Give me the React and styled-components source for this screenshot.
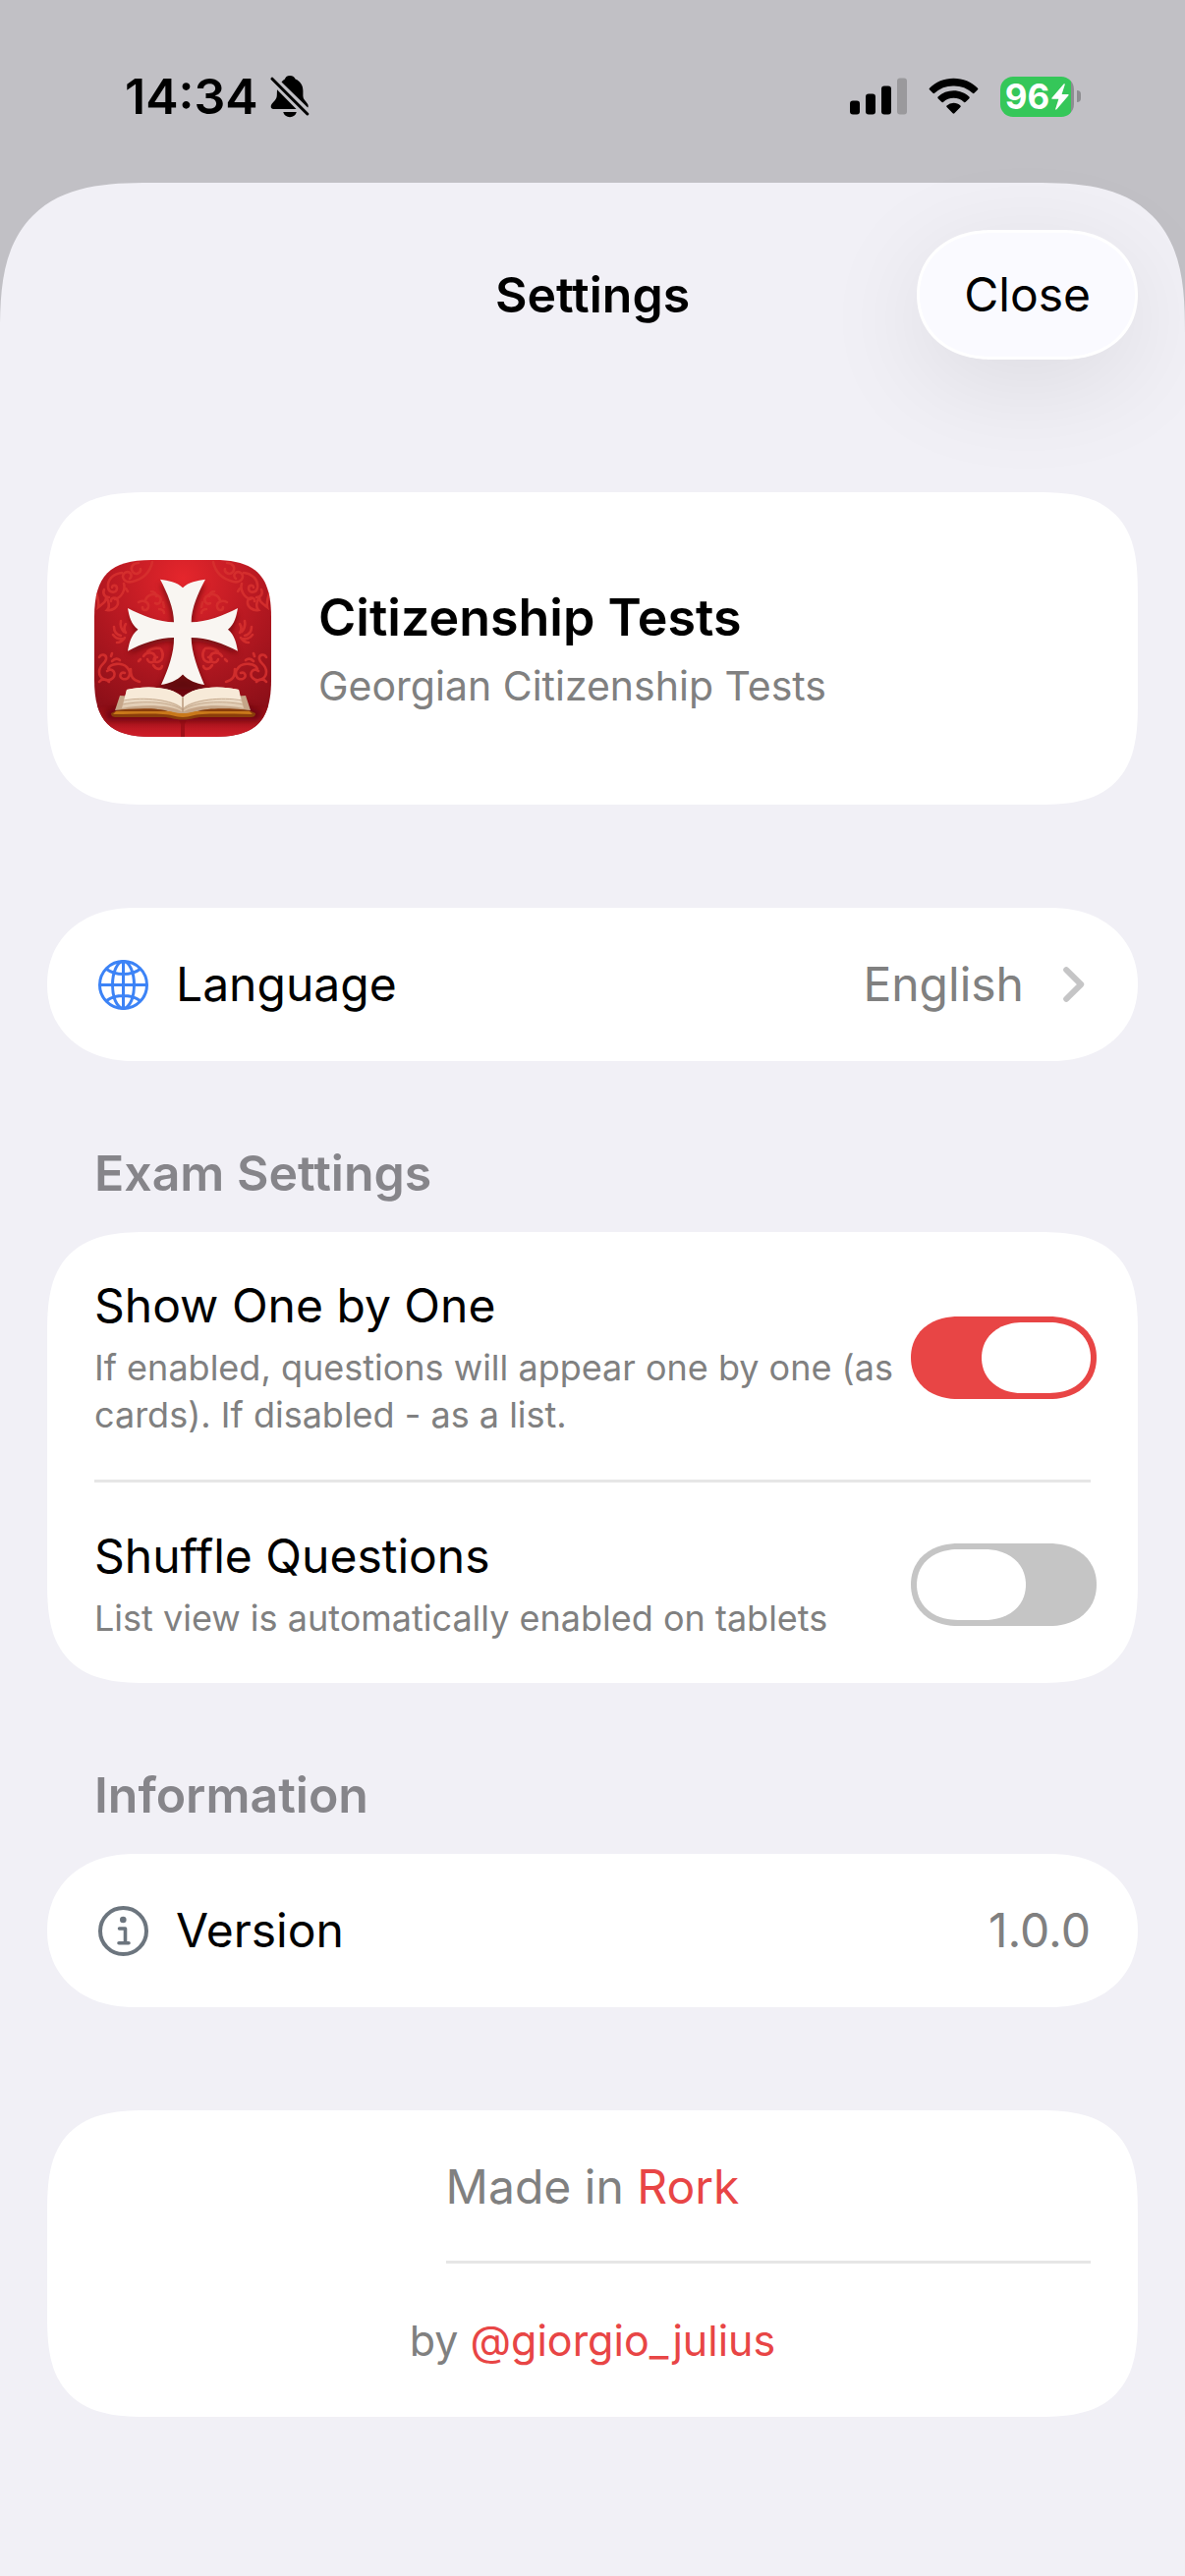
import React, { useState } from "react";
import styled, { createGlobalStyle, css } from "styled-components";

const SettingsRow = ({ icon, label, children }) => (
  <>
    <RowLabel>
      {icon}
      {label}
    </RowLabel>
    <RowValue>{children}</RowValue>
  </>
);

const ToggleRow = ({ id, title, description, defaultOn }) => {
  const [on, setOn] = useState(defaultOn);

  return (
    <SwitchRow>
      <SwitchText htmlFor={id}>
        <SwitchTitle>{title}</SwitchTitle>
        <SwitchHint>{description}</SwitchHint>
      </SwitchText>
      <Switch
        id={id}
        type="checkbox"
        role="switch"
        checked={on}
        onChange={e => setOn(e.target.checked)}
      />
    </SwitchRow>
  );
};

const App = () => (
  <>
    <GlobalStyle />
    <Screen>
      <StatusBar>
        <Clock>
          14:34
          <BellOffIcon />
        </Clock>
        <StatusIcons>
          <SignalIcon />
          <WifiIcon />
          <Battery>
            <BatteryLevel>
              96
              <BoltIcon />
            </BatteryLevel>
            <BatteryTip />
          </Battery>
        </StatusIcons>
      </StatusBar>

      <Sheet>
        <Header>
          <Title>Settings</Title>
          <CloseButton type="button">Close</CloseButton>
        </Header>

        <AppCard>
          <AppIcon />
          <div>
            <AppName>Citizenship Tests</AppName>
            <AppSubtitle>Georgian Citizenship Tests</AppSubtitle>
          </div>
        </AppCard>

        <LinkCard as="button" type="button">
          <SettingsRow icon={<GlobeIcon />} label="Language">
            English
            <ChevronIcon />
          </SettingsRow>
        </LinkCard>

        <SectionTitle>Exam Settings</SectionTitle>
        <Card>
          <ToggleRow
            id="one-by-one"
            title="Show One by One"
            description="If enabled, questions will appear one by one (as cards). If disabled - as a list."
            defaultOn={true}
          />
          <Divider />
          <ToggleRow
            id="shuffle"
            title="Shuffle Questions"
            description="List view is automatically enabled on tablets"
            defaultOn={false}
          />
        </Card>

        <SectionTitle>Information</SectionTitle>
        <RowCard>
          <SettingsRow icon={<InfoIcon />} label="Version">
            1.0.0
          </SettingsRow>
        </RowCard>

        <CreditsCard>
          <MadeIn>
            Made in <a href="#rork">Rork</a>
          </MadeIn>
          <CreditsDivider />
          <Author>
            by <a href="#giorgio_julius">@giorgio_julius</a>
          </Author>
        </CreditsCard>
      </Sheet>
    </Screen>
  </>
);

export default App;

/* ---------- icons ---------- */

const BellOffIcon = () => (
  <svg width="40" height="44" viewBox="0 0 40 44" aria-hidden="true">
    <path
      d="M20 1c3 0 5 1.500 5.600 3.600 5 2 7.800 6.400 7.800 12v5.200c0 3.200 2.600 5.200 4.400 7.600 1 1.400 1.200 3 .4 4L11.500 7.500c1.100-1.300 2.200-2.200 3.400-2.900C15.400 2.500 17 1 20 1Z"
      fill="#000"
    />
    <path
      d="M7 15.200 26.500 35H3.200C.2 35 .1 31.500 2 29.300c2-2.500 4.600-4.300 4.800-8.300Z"
      fill="#000"
    />
    <path d="M13.200 38h13.600c-.8 3.300-3.400 5.200-6.800 5.200s-6-1.900-6.800-5.200Z" fill="#000" />
    <path d="M2 4.200 37.800 40" stroke="#000" strokeWidth="3" strokeLinecap="round" />
  </svg>
);

const SignalIcon = () => (
  <svg width="58" height="38" viewBox="0 0 58 38" aria-hidden="true">
    <rect x="0" y="23.500" width="10" height="14" rx="3" />
    <rect x="16" y="16.500" width="10" height="21" rx="3" />
    <rect x="32" y="8.500" width="10" height="29" rx="3" />
    <rect x="48" y=".5" width="10" height="37" rx="3" fill="#9a999c" />
  </svg>
);

const WifiIcon = () => (
  <svg width="51" height="38" viewBox="0 0 52 38" aria-hidden="true">
    <path d="M26 .5c9.800 0 18.600 3.800 25 10 .5.500.5 1.200 0 1.700l-3.600 3.600c-.5.500-1.200.5-1.700 0A28 28 0 0 0 26 8.200a28 28 0 0 0-19.700 7.600c-.5.500-1.200.5-1.700 0L1 12.200c-.5-.5-.5-1.200 0-1.700 6.400-6.200 15.200-10 25-10Z" />
    <path d="M26 13.200c6.200 0 11.900 2.400 16.200 6.300.5.500.5 1.200 0 1.700l-3.700 3.700c-.5.500-1.100.5-1.700.1A16 16 0 0 0 26 20.800 16 16 0 0 0 15.200 25c-.6.400-1.200.4-1.700-.1l-3.700-3.700c-.5-.5-.5-1.200 0-1.700A24 24 0 0 1 26 13.200Z" />
    <path d="M26 26c2.700 0 5.200 1 7.100 2.600.5.500.5 1.100 0 1.600l-6.200 6.500c-.5.600-1.300.6-1.800 0l-6.200-6.500c-.5-.5-.5-1.100 0-1.600A11 11 0 0 1 26 26Z" />
  </svg>
);

const BoltIcon = () => (
  <svg width="18" height="27" viewBox="0 0 18 27" aria-hidden="true">
    <path
      d="M12.600.5.600 14.600c-.5.600-.2 1.200.5 1.200h6.300L4.200 25.700c-.3 1 .6 1.300 1.200.6l12-14.100c.5-.6.200-1.200-.5-1.200h-6.300L13.800 1c.3-.8-.6-1.200-1.200-.5Z"
      fill="#fff"
    />
  </svg>
);

const GlobeIcon = () => (
  <IconBox viewBox="0 0 51 51" aria-hidden="true">
    <g fill="none" stroke="#3c83f6" strokeWidth="3">
      <circle cx="25.500" cy="25.500" r="24" />
      <ellipse cx="25.500" cy="25.500" rx="11" ry="24" />
      <path d="M25.500 1.500v48M1.500 25.500h48M8.500 9.500c4.500 3.300 10.500 5 17 5s12.500-1.700 17-5M8.500 41.500c4.500-3.300 10.500-5 17-5s12.500 1.700 17 5" />
    </g>
  </IconBox>
);

const InfoIcon = () => (
  <IconBox viewBox="0 0 51 51" aria-hidden="true">
    <g fill="none" stroke="#6c757e" strokeWidth="4">
      <circle cx="25.500" cy="25.500" r="23.500" />
      <path
        d="M21.500 23h6v14.500M21 37.800h10"
        strokeLinecap="round"
        strokeLinejoin="round"
        strokeWidth="3.600"
      />
    </g>
    <circle cx="25.300" cy="14" r="3.300" fill="#6c757e" />
  </IconBox>
);

const ChevronIcon = () => (
  <svg width="28" height="36" viewBox="0 0 28 36" aria-hidden="true">
    <path
      d="M3.200 3.200 18.200 18 3.200 32.800"
      fill="none"
      stroke="#c5c5c6"
      strokeWidth="6"
      strokeLinecap="round"
      strokeLinejoin="round"
    />
  </svg>
);

const AppIcon = () => (
  <AppIconSvg viewBox="0 0 180 180" role="img" aria-label="Citizenship Tests">
    <defs>
      <radialGradient id="velvet" cx=".5" cy=".1" r=".85">
        <stop offset="0" stopColor="#e5262c" />
        <stop offset=".45" stopColor="#bd1a23" />
        <stop offset="1" stopColor="#8c0f18" />
      </radialGradient>
      <linearGradient id="table" x1="0" x2="0" y1="0" y2="1">
        <stop offset="0" stopColor="#8b0d16" />
        <stop offset="1" stopColor="#d01d28" />
      </linearGradient>
      <linearGradient id="page" x1="0" x2="0" y1="0" y2="1">
        <stop offset="0" stopColor="#fcf5e6" />
        <stop offset="1" stopColor="#d9bfa3" />
      </linearGradient>
      <filter id="soft" x="-20%" y="-20%" width="140%" height="140%">
        <feGaussianBlur stdDeviation="3" />
      </filter>
      <clipPath id="tile">
        <path d="M0 58C0 16 16 0 58 0h64c42 0 58 16 58 58v64c0 42-16 58-58 58H58c-42 0-58-16-58-58Z" />
      </clipPath>
      <g id="ornament" fill="none" stroke="#d8322f" strokeWidth="2.600" strokeLinecap="round">
        <path d="M59 2c-2 10-9 17-20 20-8 2-13-5-8-9 5-3 9 3 5 6M45 3c-6 0-9 5-6 9s9 1 8-3M28 13c-9 1-15 7-14 15 1 6 9 6 9 1 0-4-5-4-5-1M30 24c2 6-2 14-9 16" />
        <path d="M2 34c2 6 3 9 2 14 5-4 8-5 8-10 3 4 4 10 1 13 5 1 12-3 11-9-1-5-8-4-7 0M10 30c-2 5 1 8 5 8M32 29l2 3" />
        <path d="M45 43c5-3 11 0 10 5-1 4-6 4-6 0M52 41c2-6 9-8 14-4 4 4 0 9-4 7M58 32c3 0 5 2 5 5M66 50c3 0 5 2 5 4M70 43l1 5" />
        <path d="M27 62c-1 5 0 8 3 11M20 68c0 5 3 8 7 9M32 65c-2 3-2 6 0 9M19 76c3 4 7 5 11 4M31 79c-2 3-4 5-8 5" />
        <path d="M50 98c3-5 11-5 12 1s-7 7-8 2M68 91c3 5 2 12-4 13-5 0-4-6 0-5M60 107c3 5 8 5 9 1M47 101l-2 2M54 93c4-3 8-4 13-3" />
        <path d="M5 99c2-4 8-3 7 2s-7 5-7 13c0 7 9 11 14 6 4-5-1-11-6-7M14 111c2-6 14-7 19-2 6 6 2 14-4 12-5-2-2-8 2-6M37 111c0 8 2 11 9 13M5 124c3-4 7-3 10 0M18 103c3-3 6-3 8-1M18 95l-1 3" />
      </g>
    </defs>
    <g clipPath="url(#tile)">
      <rect width="180" height="180" fill="url(#velvet)" />
      <g opacity=".85">
        <use href="#ornament" />
        <use href="#ornament" transform="matrix(-1 0 0 1 180 0)" />
      </g>
      <path d="M0 148h180v32H0Z" fill="url(#table)" />
      <path d="M86 163h8l-2 4v13h-4v-13Z" fill="#a01019" />
      <path
        d="M10 155 90 120l82 35-5 9H13Z"
        fill="#5e060c"
        opacity=".7"
        filter="url(#soft)"
      />
      <path
        d="M67 24c7 3 17 5 23 12 6-7 16-9 23-12-7 14-14 30-13 44 14 0 32-7 46-14l-8 21 8 21c-14-7-32-13-46-13-1 14 7 33 12 49H67c7-16 14-34 13-49-14 0-31 6-45 13l8-21-8-21c14 7 31 14 45 14 0-14-6-30-13-44Z"
        fill="#5c070d"
        opacity=".75"
        filter="url(#soft)"
      />
      <path
        d="M67 19.700c8 1.500 17 2.500 23 8.500 6-6 15-7 23-8.500-7 13-14.300 29-14.300 43.600 15 0 33.300-7 47.300-14.300-1.500 8-3 16-10 21.700 7 6 8.500 14 10 22-14-7.500-32-13.700-47.300-13.700 0 15 7 33 13.300 48-8-1.500-16-4-22-10.500-6 6.500-14 9-22 10.500 7-15 13.500-33 13-48-15 0-33 6-47 13.700 1.500-8 3-16 10.500-22C37 65 35.500 57 34 49c14 7.300 32 14.300 47 14.300C81 49 74 33 67 19.700Z"
        fill="#f9f6f2"
      />
      <path
        d="M17 156l10-5 126 0 11 5c0 3-2 4-5 4l-49 0c-8 0-10 2.500-20 2.500S78 160 70 160l-48 0c-3 0-5-1-5-4Z"
        fill="#8a3e0b"
      />
      <path
        d="M22 154h136l3 3c-20 0-36-1-51 0-9 0-12 3-20 3s-11-3-20-3c-15-1-31 0-51 0Z"
        fill="#c9781a"
      />
      <path
        d="M26 138l64 4 64-4 5 15c-16-2-44-3-54 1-5 0-6 2-15 2s-10-2-15-2c-10-4-37-3-54-1Z"
        fill="#c5a588"
      />
      <path
        d="M33 132c20-5 48-3 57 8 9-11 37-13 57-8l5 19c-20-4-50-4-62 4-12-8-42-8-62-4Z"
        fill="url(#page)"
      />
      <path
        d="M33 132c20-5 48-3 57 8 9-11 37-13 57-8l2 12c-20-4-49-4-59 7-10-11-40-11-60-7Z"
        fill="#f7ead8"
      />
      <path
        d="M29 147c20-4 50-3 61 6 11-9 41-10 61-6M30 143c20-4 50-1 60 9 10-10 40-13 60-9"
        fill="none"
        stroke="#c4a88c"
        strokeWidth="1"
      />
      <path d="M90 140v15" stroke="#b9987c" strokeWidth="1.500" />
    </g>
  </AppIconSvg>
);

/* ---------- styles ---------- */

const GlobalStyle = createGlobalStyle`
  * {
    box-sizing: border-box;
  }

  body {
    margin: 0;
    background: #c1c0c5;
    color: #000;
    font-family: Inter, "Liberation Sans", sans-serif;
    font-size: 48px;
    line-height: 60px;
  }

  h1, h2, p {
    margin: 0;
  }

  button {
    border: 0;
    font: inherit;
    color: inherit;
    cursor: pointer;
  }

  svg {
    display: block;
    flex: none;
  }
`;

/* continuous corners where the browser has them, round ones elsewhere */
const corners = (round, smooth, shape) => css`
  border-radius: ${round};

  @supports (corner-shape: superellipse(${shape})) {
    border-radius: ${smooth};
    corner-shape: superellipse(${shape});
  }
`;

const Screen = styled.div`
  display: flex;
  flex-direction: column;
  min-height: 100vh;
`;

const StatusBar = styled.div`
  display: flex;
  align-items: center;
  justify-content: space-between;
  height: 186px;
  padding: 10px 106px 0 127px;
`;

const Clock = styled.div`
  display: flex;
  align-items: center;
  gap: 12px;
  font-size: 50px;
  font-weight: 600;
`;

const StatusIcons = styled.div`
  display: flex;
  align-items: center;
  gap: 22px;
`;

const Battery = styled.div`
  display: flex;
  align-items: center;
  gap: 3px;
`;

const BatteryLevel = styled.div`
  display: flex;
  align-items: center;
  justify-content: center;
  gap: 2px;
  width: 75px;
  height: 41px;
  border-radius: 13px;
  background: linear-gradient(to right, #35c759 72px, #8e8d91 72px);
  color: #fff;
  font-size: 35px;
  font-weight: 700;
  line-height: 41px;
`;

const BatteryTip = styled.div`
  width: 4px;
  height: 12px;
  border-radius: 0 4px 4px 0;
  background: #8e8d91;
`;

const Sheet = styled.main`
  flex: 1;
  padding: 48px;
  background: #f1f0f6;
  ${corners("114px 114px 0 0", "154px 154px 0 0", 1.5)}
`;

const Header = styled.header`
  display: grid;
  grid-template-columns: 1fr auto 1fr;
  align-items: center;
  margin-bottom: 135px;
`;

const Title = styled.h1`
  grid-column: 2;
  font-size: 50px;
  font-weight: 600;
`;

const CloseButton = styled.button`
  justify-self: end;
  height: 132px;
  padding: 0 45px;
  border: 3px solid #fff;
  background: #fafaff;
  box-shadow: 0 24px 110px rgba(0, 0, 0, 0.09);
  ${corners("66px", "76px / 66px", 1.1)}
`;

const Card = styled.section`
  background: #fff;
  ${corners("78px", "105px", 1.5)}
`;

const AppCard = styled(Card)`
  display: flex;
  align-items: center;
  gap: 48px;
  margin-bottom: 105px;
  padding: 69px 48px;
`;

const AppIconSvg = styled.svg`
  width: 180px;
  height: 180px;
`;

const AppName = styled.h2`
  font-size: 52px;
  font-weight: 600;
  line-height: 72px;
`;

const AppSubtitle = styled.p`
  margin-top: 3px;
  color: #808080;
  font-size: 41px;
  line-height: 60px;
`;

const RowCard = styled(Card)`
  display: flex;
  align-items: center;
  justify-content: space-between;
  width: 100%;
  height: 156px;
  padding: 0 48px 0 52px;
  ${corners("78px", "88px / 78px", 1.1)}
`;

const LinkCard = styled(RowCard)`
  text-align: left;
`;

const IconBox = styled.svg`
  width: 51px;
  height: 51px;
`;

const RowLabel = styled.span`
  display: flex;
  align-items: center;
  gap: 28px;
`;

const RowValue = styled.span`
  display: flex;
  align-items: center;
  gap: 40px;
  color: #808080;
`;

const SectionTitle = styled.h2`
  margin: 84px 48px 30px;
  color: #86858a;
  font-size: 50px;
  font-weight: 600;
`;

const SwitchRow = styled.div`
  display: flex;
  align-items: center;
  justify-content: space-between;
  gap: 12px;
  padding: 45px 42px 42px 48px;
`;

const SwitchText = styled.label`
  cursor: pointer;
`;

const SwitchTitle = styled.span`
  display: block;
`;

const SwitchHint = styled.span`
  display: block;
  margin-top: 9px;
  color: #808080;
  font-size: 36px;
  line-height: 48px;
`;

const Switch = styled.input`
  appearance: none;
  display: flex;
  flex: none;
  justify-content: ${props => (props.checked ? "flex-end" : "flex-start")};
  width: 189px;
  height: 84px;
  margin: 0;
  padding: 6px;
  background: ${props => (props.checked ? "#e84545" : "#c5c5c5")};
  cursor: pointer;
  ${corners("42px", "48px / 42px", 1.1)}

  &::before {
    content: "";
    width: 111px;
    height: 72px;
    background: #fff;
    ${corners("36px", "42px / 36px", 1.1)}
  }
`;

const Divider = styled.hr`
  height: 3px;
  margin: 0 48px;
  border: 0;
  background: #e6e6e6;
`;

const CreditsCard = styled(Card)`
  display: grid;
  grid-template-columns: 1fr auto 1fr;
  margin-top: 105px;
  padding: 0 48px;
  color: #808080;

  & a {
    color: #e84545;
    text-decoration: none;
  }
`;

const MadeIn = styled.p`
  grid-column: 2;
  padding: 48px 0 45px;
`;

const CreditsDivider = styled(Divider)`
  grid-column: 2 / -1;
  margin: 0;
`;

const Author = styled.p`
  grid-column: 1 / -1;
  padding: 48px 0;
  font-size: 43px;
  text-align: center;
`;
